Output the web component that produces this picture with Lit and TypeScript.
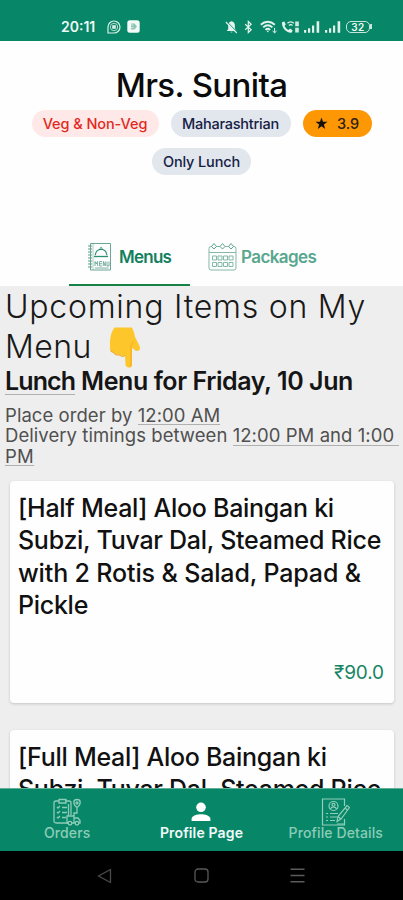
import { LitElement, html, css } from "lit";
import { customElement, property } from "lit/decorators.js";

const bellOff = html`<svg width="13" height="14" viewBox="0 0 13 14"><path d="M6.500 1.200c2.300.4 3.400 2 3.400 4.300V9l1.400 2H1.800L3.200 9V5.500c0-2.300 1-3.900 3.300-4.300zM5.300 11.700h2.400c-.3 1.100-2.100 1.100-2.400 0z" fill="#e3f3ed"/><path d="M1.600 1.400l10.500 10.500" stroke="#078767" stroke-width="1"/><path d="M.8 2l11 11" stroke="#e3f3ed" stroke-width="1.100"/></svg>`;
const bluetooth = html`<svg width="9" height="14" viewBox="0 0 9 14" fill="none" stroke="#e3f3ed" stroke-width="1.200"><path d="M1.200 4.300l6 5.400-2.900 2.800V1.500l2.900 2.800-6 5.400"/></svg>`;
const wifi = html`<svg width="17" height="14" viewBox="0 0 17 14" fill="none" stroke="#e3f3ed" stroke-width="1.900"><path d="M.8 4.700c4.200-3.900 9.800-3.900 14 0M3.200 7.400c2.800-2.600 6.400-2.600 9.200 0M5.500 9.900c1.400-1.300 3.200-1.300 4.600 0"/><path d="M6.500 10.800h2.600l-1.300 1.700z" fill="#e3f3ed" stroke="none"/><path d="M14.600 7.800v5M12.600 11l2 1.800 2-1.800" stroke-width="1"/></svg>`;
const call = html`<svg width="19" height="14" viewBox="0 0 19 14"><path d="M1 2.300L3.300 1.500l1.500 3-1.300 1.300c.8 2 2.100 3.300 4 4.100l1.500-1.300 2.600 1.700-.8 2.300C5.600 13.300.6 8.200 1 2.300z" fill="#e3f3ed"/><path d="M6.500 3.200c2-1.900 4.500-1.900 6.300 0M8 5.400c1.100-1 2.400-1 3.500 0" fill="none" stroke="#e3f3ed" stroke-width="1.300"/><path d="M14.200 1.500h3.600v4.700h-3.600zM14.200 7.700h3.600v4.800h-3.600z" fill="#d2ebe2"/></svg>`;
const signal = html`<svg width="18" height="14" viewBox="0 0 18 14" fill="#dff1ea"><path d="M1 10h2.200v2.700H1zM5 8.200h2.200v4.500H5zM9 5.500h2.200v7.200H9zM13.600 1.300h2.600v11.400h-2.600z"/></svg>`;
const whatsapp = html`<svg width="14" height="14" viewBox="0 0 14 14" fill="none" stroke="#d9f0e8" stroke-width="1.200"><path d="M1 13V7a6 6 0 1 1 6 6z"/><circle cx="7" cy="7" r="3.700" stroke-width=".8"/><rect x="5.200" y="5.200" width="3.600" height="3.600" fill="#d9f0e8" stroke="none"/></svg>`;
const appBadge = html`<svg width="13" height="13" viewBox="0 0 13 13"><rect x=".3" y=".3" width="12.400" height="12.400" rx="2.500" fill="#f3faf7"/><path d="M4 3.500h3.500L10 6.500 7.500 9.500H4z" fill="#8cc5b3"/><path d="M4 5h2.500M4 7.500h2.500" stroke="#f3faf7" stroke-width=".7"/></svg>`;

const menuIcon = html`<svg width="25" height="30" viewBox="0 0 25 30" fill="none" stroke="#5a9d89" stroke-width=".9"><path d="M3.500 1.500h20v26.500h-20z"/><path d="M6 1.500V28" stroke-width=".5"/><path d="M1 4h4M1 7h4M1 10h4M1 13h4M1 16h4M1 19h4M1 22h4M1 25h4" stroke-width="1"/><path d="M7 14.500h14" stroke="#2b8f72" stroke-width="1.300"/><path d="M8.200 13.300c1-8 10.800-8 11.800 0" stroke="#2b8f72" stroke-width="1.200"/><path d="M13 6.800c0-1.800 2.200-1.800 2.200 0" stroke="#2b8f72"/><path d="M8 24v-4.500l1.300 2.500 1.300-2.500V24M15 19.500h-2.400V24H15M12.600 21.700H15M16.300 24v-4.500l2 4.500v-4.500M20 19.500V24h2v-4.500M8 26h13.500" stroke-width=".8"/></svg>`;
const calendarIcon = html`<svg width="29" height="30" viewBox="0 0 29 30" fill="none" stroke="#83b9a8" stroke-width="1"><path d="M4 4.500H3a2 2 0 0 0-2 2V26a2 2 0 0 0 2 2h23a2 2 0 0 0 2-2V6.500a2 2 0 0 0-2-2h-1M8 4.500h4M17 4.500h4M1 10.500h27"/><path d="M3.500 4.500L6 1.500l2.500 3L6 7zM12 4.500l2.500-3 2.500 3L14.500 7zM20.500 4.500l2.500-3 2.500 3L23 7z" stroke="#5ba68f"/><path d="M4.500 14h4v4h-4zM10 14h4v4h-4zM15.500 14h4v4h-4zM21 14h4v4h-4zM4.500 20.500h4v4h-4zM10 20.500h4v4h-4zM15.500 20.500h4v4h-4zM21 20.500h4v4h-4z"/></svg>`;
const ordersIcon = html`<svg width="28" height="28" viewBox="0 0 28 28" fill="none" stroke="#8dccb8" stroke-width="1.300"><path d="M16 25H3a2 2 0 0 1-2-2V5a2 2 0 0 1 2-2h3M12 3h4a2 2 0 0 1 2 2v12"/><path d="M6 1.500h7V5H6zM15.500 6v12"/><path d="M4 9l1 1 2-2M4 14l1 1 2-2M4 19l1 1 2-2M9 9.500h5M9 14.500h5M9 19.500h4"/><path d="M14 18h7v7h-7zM21 20h4l2 2.500V25h-6"/><circle cx="17" cy="25.200" r="1.800" fill="#078767"/><circle cx="24" cy="25.200" r="1.800" fill="#078767"/><path d="M24 9.500c-4.500-3.500-4-8 0-8s4.500 4.500 0 8zM24 9.500V15h-3v3"/><circle cx="24" cy="5" r="1"/></svg>`;
const detailsIcon = html`<svg width="29" height="29" viewBox="0 0 29 29" fill="none" stroke="#91cebb" stroke-width="1.200"><path d="M23.500 8V1h-22v26h22v-6"/><circle cx="12.500" cy="8" r="4.500"/><circle cx="12.500" cy="6.800" r="1.500"/><path d="M9.500 11c.8-2.700 5.200-2.700 6 0M5 15.500h2M9 15.500h8M5 19h2M9 19h7M5 22.500h2M9 22.500h5M16 26h7"/><path d="M26 7.500l2.500 2L20 21l-4 2.500 1-5z" fill="#078767"/><path d="M24 10l2.500 2M17 18.500l3 2.500"/></svg>`;
const personIcon = html`<svg width="20" height="20" viewBox="0 0 20 20" fill="#fff"><circle cx="10" cy="5.300" r="4.800"/><path d="M.6 19v-2.200c0-3.300 6-4.600 9.400-4.600s9.400 1.300 9.400 4.600V19z"/></svg>`;
const hand = html`<svg class="hand" width="34" height="41" viewBox="0 0 34 41"><path d="M6.500.5h17.300c1.500 2.600 2.600 5.600 3.200 9.300l4.600 9.500c1.600 3.500-2 6.100-4.700 4L24 20.800V37.500c0 4-6.300 4-6.500 0L17 27.700c-1.500 1.700-4.500 1.500-5.500-.5-2.300 1-4.700.1-5.200-2-2.300.2-4.300-1.200-4.200-3.600C1.500 13.500 2.500 5.500 6.500.5z" fill="#fdc62b"/><path d="M6.300 25.200c.5 2.100 2.900 3 5.200 2 1 2 4 2.200 5.500.5l.2 1.200c-2.200 1.400-5 .9-6.300-.6-2.500.8-4.700-.6-5.300-2.200-2.400-.2-3.500-2-3.500-4.300.6 1.700 2.200 3.500 4.200 3.400z" fill="#eda618"/><path d="M24 20.800V37.500c0 2-1.400 3-3.200 3 1-1 1.300-3.500 1.300-5.500V22c0-4 1-6.500 4.500-8.500-1.800 2.500-2.600 4.800-2.600 7.300z" fill="#f7b727"/></svg>`;

@customElement("status-bar")
class StatusBar extends LitElement {
  static styles = css`
    :host { display: flex; align-items: center; height: 41px; box-sizing: border-box; padding: 12px 31px 0 61px; background: #078767; color: #f1faf6; font: 600 14px Inter, sans-serif; }
    .left, .right { display: flex; align-items: center; }
    .app { margin-left: 12px; display: flex; gap: 6px; align-items: center; }
    .right { margin-left: auto; }
    .gap { margin-left: 6px; display: flex; }
    .wifi { margin: 0 4px 0 7px; display: flex; }
    .battery { width: 22px; height: 10px; line-height: 10px; border: 1px solid #c8e6dc; border-radius: 5px; font-size: 10px; letter-spacing: .5px; text-align: center; margin-left: 4px; }
    .tip { width: 2px; height: 5px; background: #c8e6dc; }
    .signals { display: flex; gap: 3px; margin-left: 3px; }
  `;
  render() {
    return html`<div class="left">20:11<span class="app">${whatsapp}${appBadge}</span></div>
      <div class="right">${bellOff}<span class="gap">${bluetooth}</span><span class="wifi">${wifi}</span>${call}<span class="signals">${signal}${signal}</span><span class="battery">32</span><span class="tip"></span></div>`;
  }
}

@customElement("meal-card")
class MealCard extends LitElement {
  @property({ attribute: false }) lines: string[] = [];
  @property() price = "";
  static styles = css`
    :host { display: flex; flex-direction: column; box-sizing: border-box; height: 222px; flex: none; margin: 0 9px 0 10px; padding: 11px 10px 18px 8px; background: #fefefe; border-radius: 4px; box-shadow: 0 1px 3px rgba(0,0,0,.18); }
    .title { font: 500 25px/32.300px Inter, sans-serif; letter-spacing: -.28px; color: #111; white-space: nowrap; }
    .line { display: block; }
    .line:nth-child(3) { letter-spacing: -.14px; }
    .price { margin-top: auto; text-align: right; font: 400 19px/24px Inter, sans-serif; letter-spacing: -.1px; color: #188564; }
  `;
  render() {
    return html`<div class="title">${this.lines.map((l) => html`<span class="line">${l}</span>`)}</div><div class="price">${this.price}</div>`;
  }
}

@customElement("app-root")
class AppRoot extends LitElement {
  static styles = css`
    :host { display: flex; flex-direction: column; height: 900px; overflow: hidden; background: #fefefe; font-family: Inter, sans-serif; }
    .profile { height: 188px; flex: none; display: flex; flex-direction: column; align-items: center; }
    .name { margin-top: 24px; font: 500 33px/40px Inter, sans-serif; letter-spacing: -.65px; color: #0b0b0b; }
    .chips { display: flex; gap: 12px; margin-top: 5px; }
    .second { margin-top: 11px; }
    .chip { height: 27px; line-height: 27px; box-sizing: border-box; border-radius: 14px; text-align: center; font-size: 14.500px; font-weight: 500; letter-spacing: -.08px; white-space: nowrap; color: #152044; background: #e2e6ed; }
    .veg { width: 127px; background: #ffe9e8; color: #e22820; }
    .region { width: 120px; letter-spacing: -.24px; }
    .rating { width: 69px; background: #fd9704; color: #2b2110; display: flex; align-items: center; justify-content: center; gap: 9px; }
    .lunch { width: 99px; letter-spacing: -.15px; }
    .tabs { height: 57px; flex: none; display: flex; padding-left: 69px; }
    .tab { display: flex; align-items: center; width: 121px; box-sizing: border-box; font-size: 17px; font-weight: 600; color: #12805f; border-bottom: 2px solid transparent; padding: 1px 0 0 18px; gap: 7px; letter-spacing: -.75px; }
    .active { border-color: #158144; }
    .other { color: #58a78e; width: 160px; gap: 4px; letter-spacing: -.6px; }
    .content { flex: 1; min-height: 0; overflow: hidden; display: flex; flex-direction: column; background: #eee; }
    .content > * { flex: none; }
    .heading { margin: 1px 0 0 5px; font: 300 32px/40px Inter, sans-serif; color: #191919; letter-spacing: .75px; white-space: nowrap; }
    .second-line { display: flex; height: 40px; letter-spacing: .4px; }
    .hand { margin-left: 16px; flex: none; }
    .meal { margin: 0 0 0 5px; height: 30px; font: 600 25px/28px Inter, sans-serif; letter-spacing: -.42px; color: #151515; white-space: nowrap; }
    .mark { background: linear-gradient(#b0b0b0, #b0b0b0) left bottom / 100% 1px no-repeat; }
    .lunch-word { letter-spacing: -.9px; display: inline-block; line-height: 27px; }
    .times { margin: 8px 0 0 5px; height: 76px; font: 400 18.500px/20.300px Inter, sans-serif; letter-spacing: .06px; color: #505050; white-space: nowrap; }
    .times div { height: 20.300px; }
    .times .mark { display: inline-block; height: 20.300px; }
    .cards { display: flex; flex-direction: column; gap: 27px; }
    .nav { height: 63px; flex: none; display: grid; grid-template-columns: 1fr 1fr 1fr; background: #078767; border-top: 1px solid #5faf99; box-sizing: border-box; }
    .item { display: flex; flex-direction: column; align-items: center; font-size: 14px; line-height: 16px; font-weight: 500; color: #8dccb8; white-space: nowrap; letter-spacing: .14px; }
    .icon { height: 27px; margin-top: 9px; display: flex; align-items: flex-start; justify-content: center; }
    .person { padding-top: 4px; height: 23px; }
    .selected { color: #f3fbf8; font-weight: 600; }
    .details { letter-spacing: .12px; }
    .system { height: 49px; flex: none; background: #000; display: flex; align-items: center; padding: 0 98px 0 97px; justify-content: space-between; }
  `;
  render() {
    return html`
      <status-bar></status-bar>
      <section class="profile">
        <div class="name">Mrs. Sunita</div>
        <div class="chips">
          <span class="chip veg">Veg &amp; Non-Veg</span><span class="chip region">Maharashtrian</span>
          <span class="chip rating"><svg width="13" height="13" viewBox="0 0 13 13"><path d="M6.500.5l1.500 4.300h4.500L8.900 7.500l1.300 4.400-3.700-2.700-3.700 2.700 1.300-4.400L.5 4.800H5z" fill="#15120c"/></svg>3.9</span>
        </div>
        <div class="chips second"><span class="chip lunch">Only Lunch</span></div>
      </section>
      <div class="tabs">
        <div class="tab active">${menuIcon}Menus</div>
        <div class="tab other">${calendarIcon}Packages</div>
      </div>
      <main class="content">
        <div class="heading"><div>Upcoming Items on My</div><div class="second-line">Menu${hand}</div></div>
        <div class="meal"><span class="mark lunch-word">Lunch</span> Menu for Friday, 10 Jun</div>
        <div class="times">
          <div>Place order by <span class="mark">12:00 AM</span></div>
          <div>Delivery timings between <span class="mark">12:00 PM and 1:00&nbsp;</span></div>
          <div><span class="mark">PM</span></div>
        </div>
        <div class="cards">
          <meal-card .lines=${["[Half Meal] Aloo Baingan ki", "Subzi, Tuvar Dal, Steamed Rice", "with 2 Rotis & Salad, Papad &", "Pickle"]} price="₹90.0"></meal-card>
          <meal-card .lines=${["[Full Meal] Aloo Baingan ki", "Subzi, Tuvar Dal, Steamed Rice"]}></meal-card>
        </div>
      </main>
      <nav class="nav">
        <div class="item"><span class="icon">${ordersIcon}</span>Orders</div>
        <div class="item selected"><span class="icon person">${personIcon}</span>Profile Page</div>
        <div class="item details"><span class="icon">${detailsIcon}</span>Profile Details</div>
      </nav>
      <div class="system">
        <svg width="15" height="16" viewBox="0 0 15 16" fill="none" stroke="#4a4a4a" stroke-width="1.300"><path d="M13.500 1.500v13L1.500 8z"/></svg>
        <svg width="15" height="15" viewBox="0 0 15 15" fill="none" stroke="#585858" stroke-width="1.300"><rect x="1" y="1" width="13" height="13" rx="3"/></svg>
        <svg width="15" height="15" viewBox="0 0 15 15" stroke="#5b5b5b" stroke-width="1.400"><path d="M.5 1.200h14M.5 7.500h14M.5 13.800h14"/></svg>
      </div>`;
  }
}
